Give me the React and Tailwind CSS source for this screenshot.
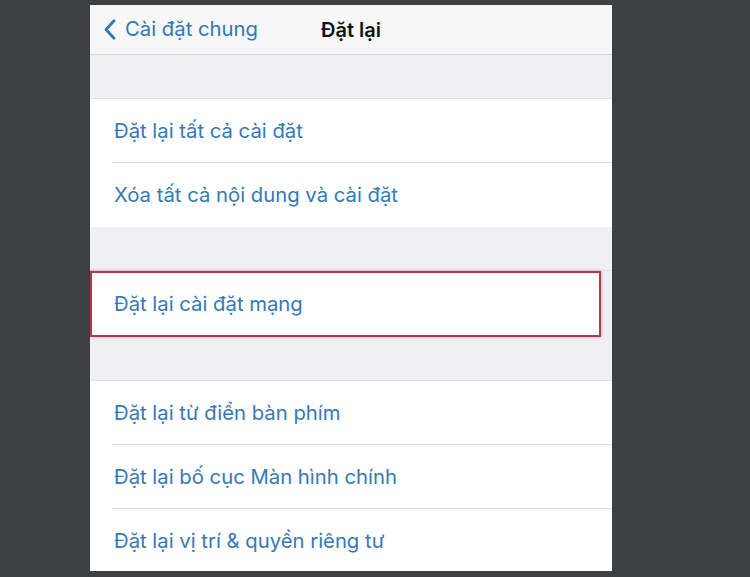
import React from 'react';

const GROUPS = [
  ['Đặt lại tất cả cài đặt', 'Xóa tất cả nội dung và cài đặt'],
  ['Đặt lại cài đặt mạng'],
  ['Đặt lại từ điển bàn phím', 'Đặt lại bố cục Màn hình chính', 'Đặt lại vị trí & quyền riêng tư'],
];

function Row({ label, last, highlight }) {
  return (
    <div className={`relative bg-white flex items-center ${highlight ? 'h-[66px] border-2 border-[#b23a48] shadow-[0_0_3px_rgba(220,80,90,0.5)] mr-[11px] pl-[22px]' : 'h-[64px] pl-[24px]'}`}>
      <span className="text-[20.3px] text-[#3579b5]">{label}</span>
      {!last && <div className="absolute left-[22px] right-0 bottom-0 h-px bg-[#dcdce0]" />}
    </div>
  );
}

export default function App() {
  return (
    <div className="w-[750px] h-[577px] bg-[#3e3f41] flex justify-start pl-[90px] pt-[5px] overflow-hidden font-['Inter','Liberation_Sans',Arial,sans-serif]">
      <div className="w-[522px] h-[566px] bg-[#efeff4] overflow-hidden flex flex-col">
        <div className="h-[50px] shrink-0 bg-[#f7f7f8] border-b border-[#d8d8dc] relative flex items-center">
          <div className="flex items-center pl-[14px] text-[#2f78b7]">
            <svg width="12" height="21" viewBox="0 0 12 21" fill="none" stroke="#2f78b7" strokeWidth="2.8" strokeLinecap="round" strokeLinejoin="round">
              <path d="M10 1.8 L2 10.5 L10 19.2" />
            </svg>
            <span className="ml-[9px] text-[20.3px]">Cài đặt chung</span>
          </div>
          <div className="absolute inset-0 flex items-center justify-center pointer-events-none">
            <span className="text-[20px] font-semibold text-[#111]">Đặt lại</span>
          </div>
        </div>
        {GROUPS.map((items, gi) => (
          <div key={gi} className="flex flex-col">
            <div className="h-[44px] shrink-0 border-b border-[#e0e0e4]" />
            {items.map((label, i) => (
              <Row key={label} label={label} last={i === items.length - 1} highlight={gi === 1} />
            ))}
          </div>
        ))}
      </div>
    </div>
  );
}
